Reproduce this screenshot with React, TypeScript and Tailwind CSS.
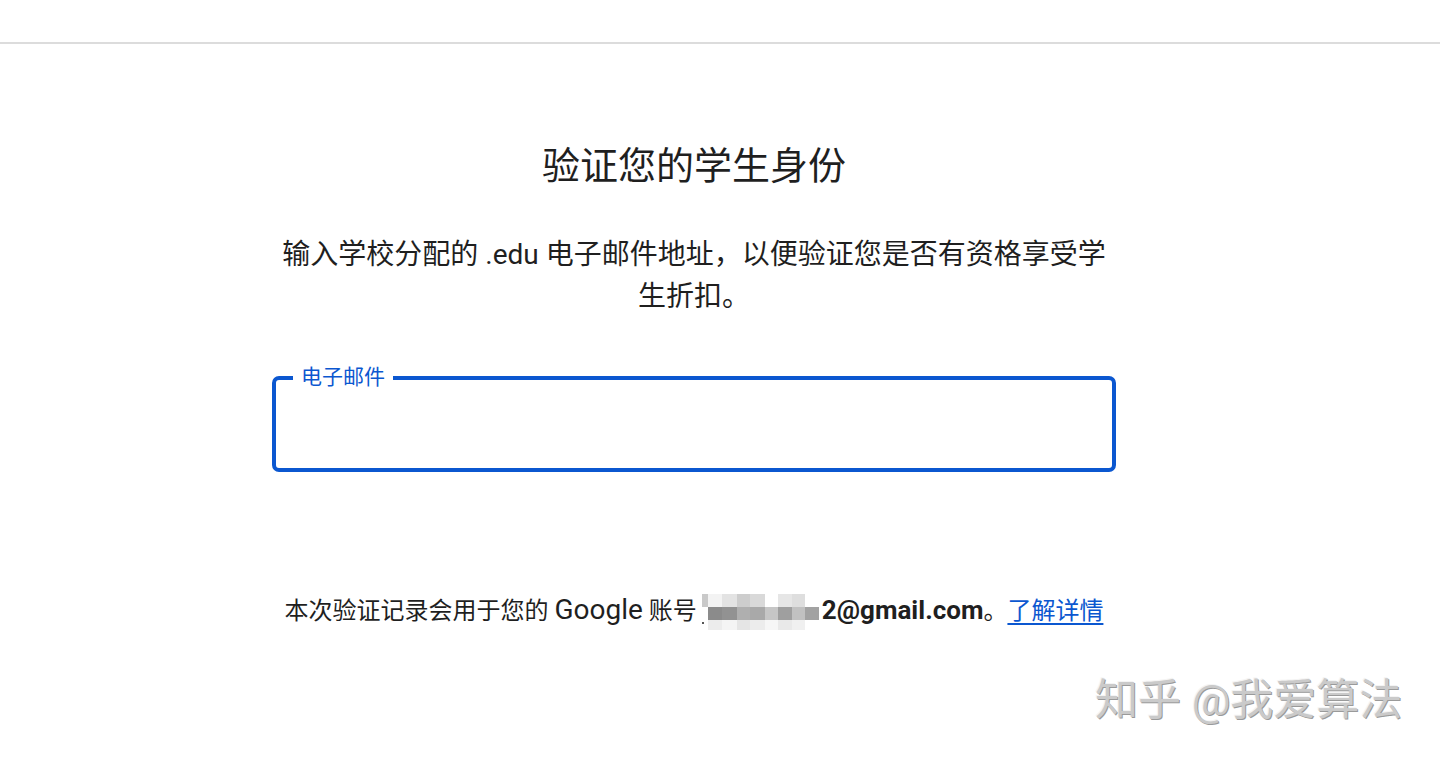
import React from "react";

const F = { fontFamily: 'Roboto, "Noto Sans CJK SC", sans-serif' };

const mosaic: string[][] = [
  ["#c9c9c9", "#f3f3f3", "#e3e3e3", "#cdcdcd", "#d9d9d9", "#ffffff", "#e6e6e6", "#dedede", "#ffffff"],
  ["#ffffff", "#8b8b8b", "#929292", "#afafaf", "#a9a9a9", "#c6c6c6", "#9f9f9f", "#c1c1c1", "#a2a2a2"],
  ["#ffffff", "#ececec", "#f4f4f4", "#e5e5e5", "#ececec", "#f6f6f6", "#e9e9e9", "#f0f0f0", "#ffffff"],
];
const widths = [6, 14, 15, 13, 15, 13, 14, 13, 14];

function Mosaic() {
  return (
    <span className="relative inline-flex flex-col align-middle ml-[5px] mr-[3px] -translate-y-[1px]">
      {mosaic.map((row, r) => (
        <span key={r} className="flex" style={{ height: r === 2 ? 10 : 13 }}>
          {row.map((c, i) => (
            <span key={i} style={{ width: widths[i], backgroundColor: c }} />
          ))}
        </span>
      ))}
      <span className="absolute left-[0px] bottom-[6px] w-[2px] h-[2px] bg-[#555]" />
    </span>
  );
}

export default function App() {
  return (
    <div className="relative w-[1440px] h-[760px] bg-white overflow-hidden text-[#202124]" style={F}>
      <div className="h-[42px]" />
      <div className="h-[2px] bg-[#dcdcdc]" />
      <div className="ml-[272px] w-[844px] flex flex-col items-center">
        <h1 className="mt-[99px] text-[38px] leading-[46px] font-normal text-[#1f1f1f]">验证您的学生身份</h1>
        <p className="mt-[45px] w-[840px] text-center text-[28px] leading-[42px] text-[#1f1f1f]">
          输入学校分配的 .edu 电子邮件地址，以便验证您是否有资格享受学生折扣。
        </p>
        <div className="relative mt-[58px] w-[844px] h-[96px] border-[4px] border-[#0b57d0] rounded-[7px]">
          <span className="absolute left-[17px] top-[-17px] bg-white px-[8px] text-[21px] leading-[28px] text-[#0b57d0]">
            电子邮件
          </span>
        </div>
        <p className="mt-[120px] text-[24px] leading-[36px] whitespace-nowrap text-[#1f1f1f]">
          本次验证记录会用于您的 <span className="text-[28px]">Google</span> 账号
          <Mosaic />
          <span className="font-bold text-[26px]">2@gmail.com</span>。
          <span className="text-[#0b57d0] underline underline-offset-[4px]">了解详情</span>
        </p>
      </div>
      <div
        className="absolute left-[1095px] top-[675px] text-[43px] leading-[50px] text-[#cacaca] whitespace-nowrap"
        style={{ textShadow: "1px 1px 0 #9a9a9a, -1px -1px 0 #f4f4f4" }}
      >
        知乎 @我爱算法
      </div>
    </div>
  );
}
